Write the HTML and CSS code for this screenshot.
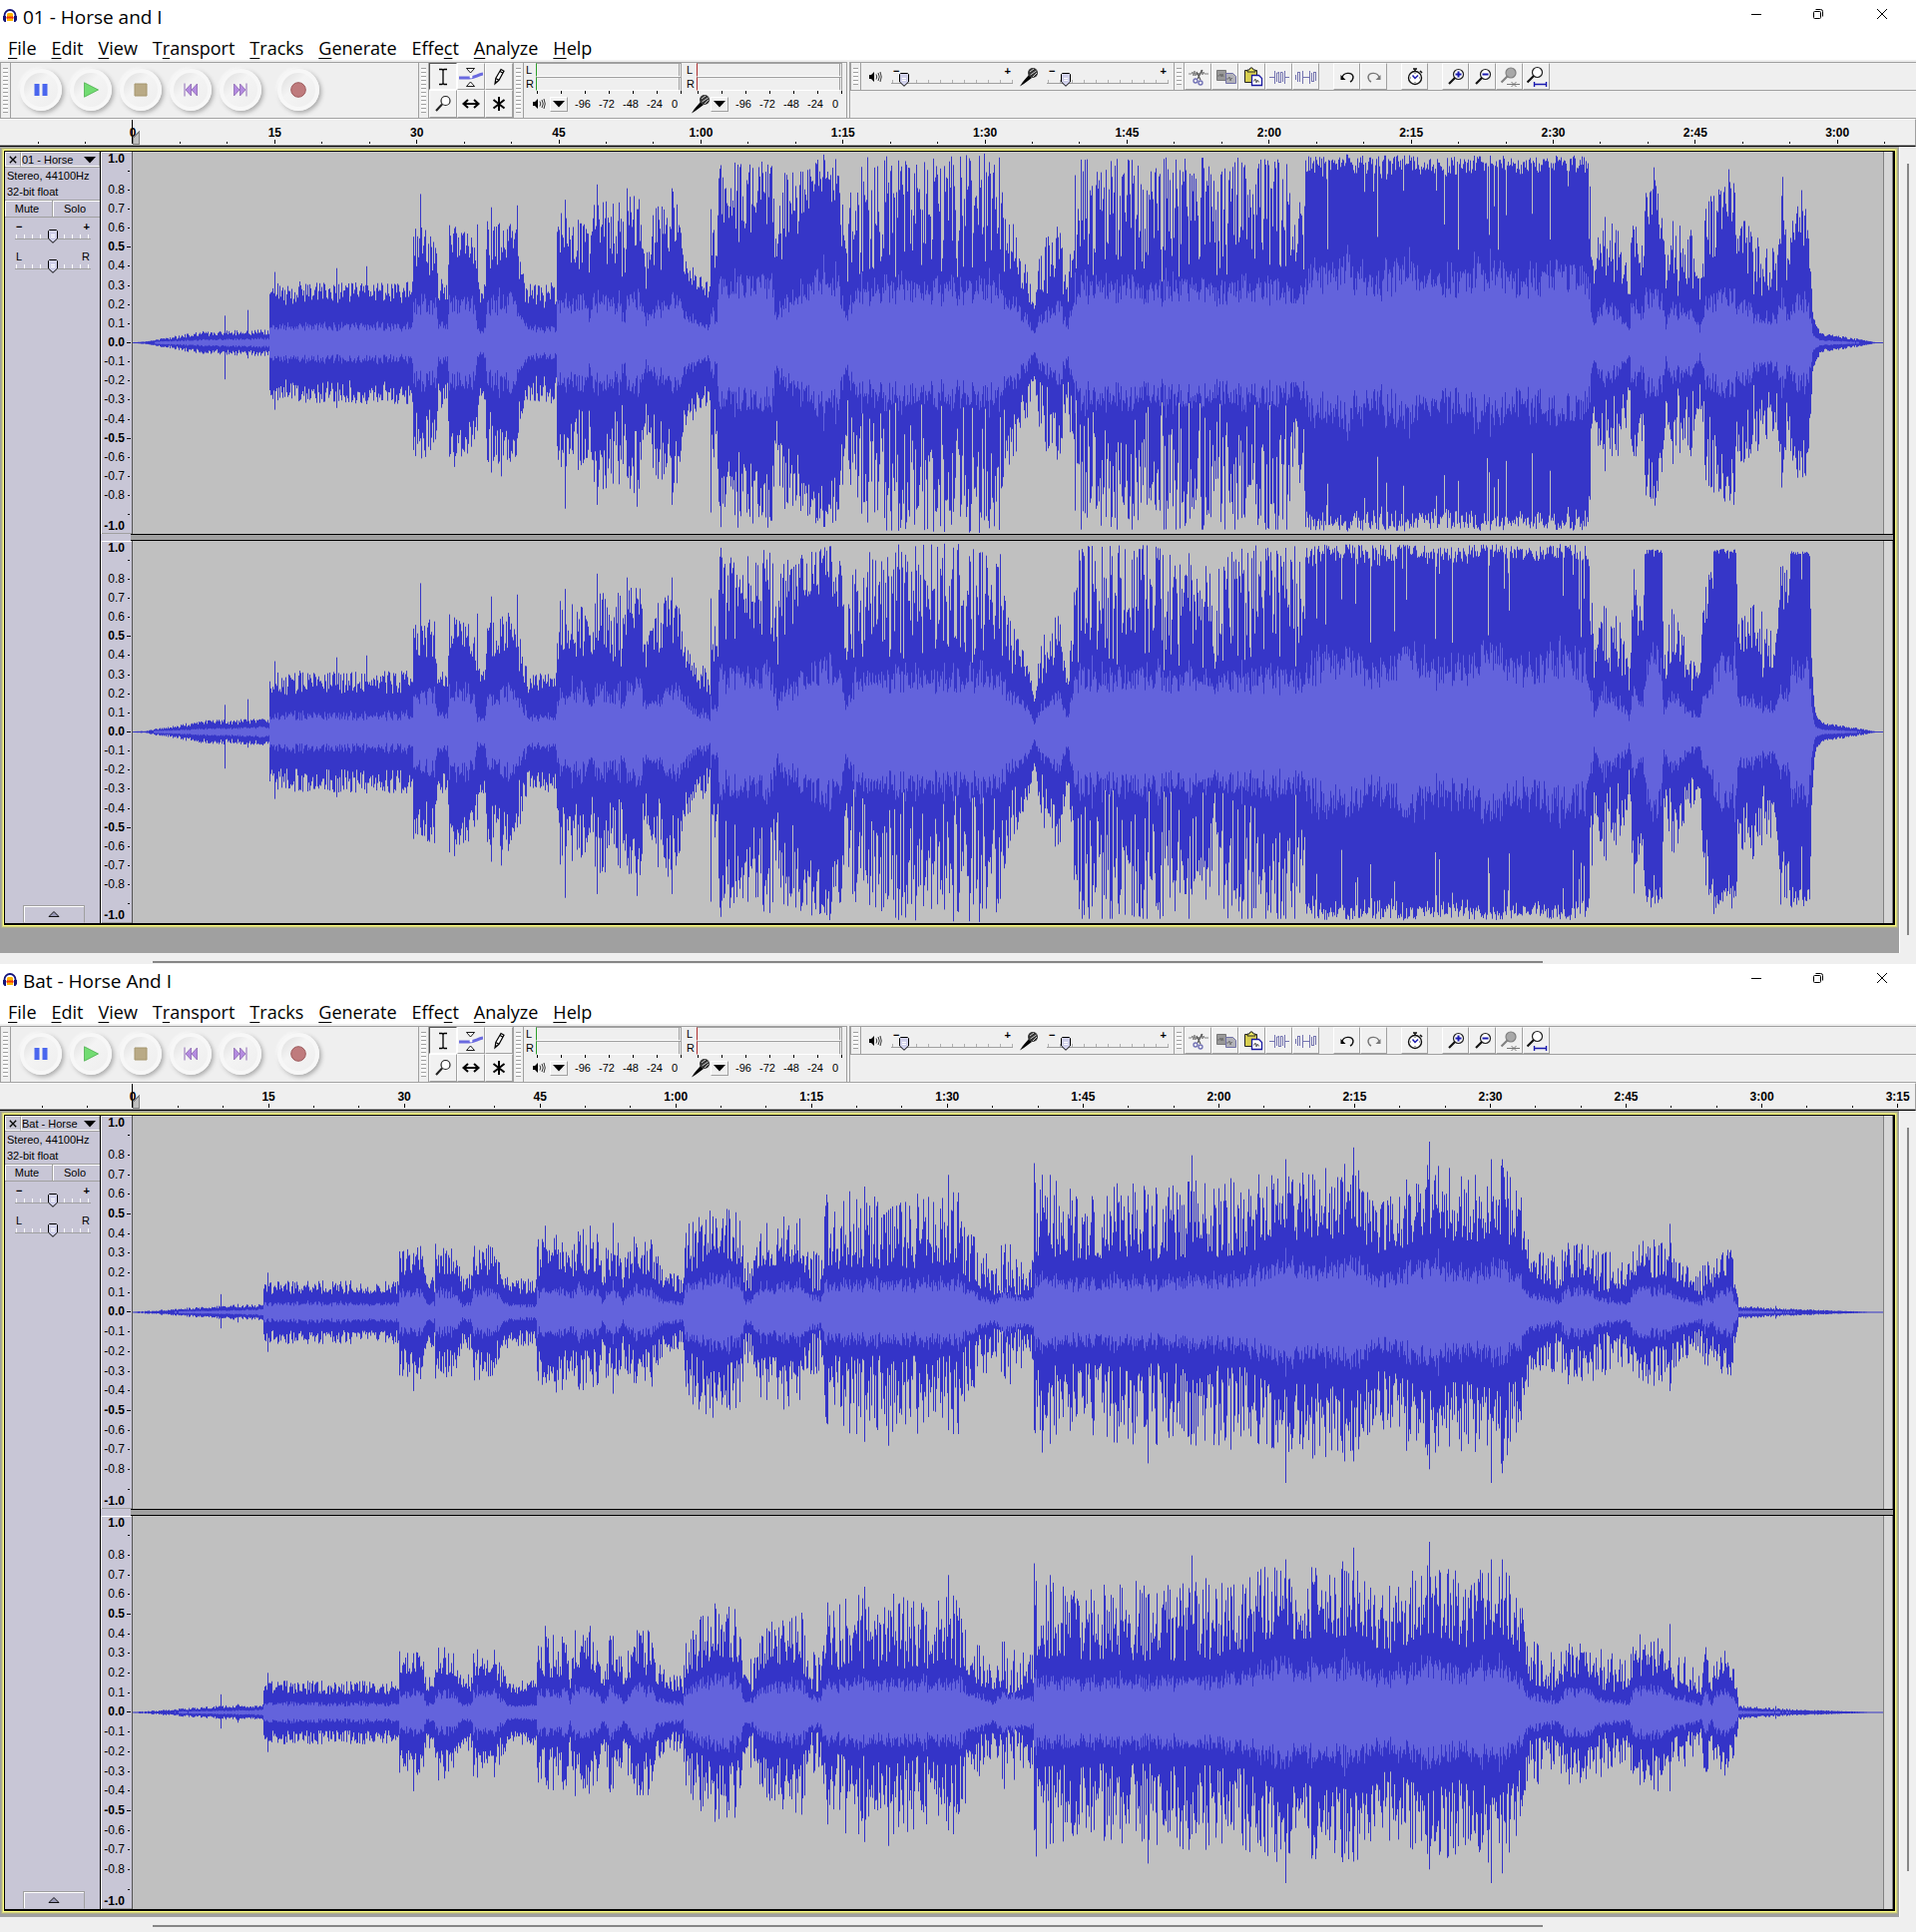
FILE: index.html
```
<!DOCTYPE html>
<html lang="en">
<head>
<meta charset="utf-8">
<title>Audacity</title>
<link rel="stylesheet" href="styles.css">
</head>
<body>
<svg class="sprite" aria-hidden="true">
  <symbol id="i-logo" viewBox="0 0 14 14"><path d="M1.500 10V6.500a5.500 5.500 0 0 1 11 0V10" fill="none" stroke="#13137a" stroke-width="1.800"/><path d="M0 7h3v6H1.500L0 11zM14 7h-3v6h1.500L14 11z" fill="#13137a"/><path d="M4 5l1-1h4l1 1v7H4z" fill="#ffb400"/><path d="M3 9l1.500-2 1.500 1 1-1 1 1 1.500-1L11 9l-1.500 1-1.500-1-1 1-1-1-1.500 1z" fill="#f03010"/></symbol>
  <symbol id="i-min" viewBox="0 0 12 12"><path d="M1 6.500h10" stroke="#000"/></symbol>
  <symbol id="i-max" viewBox="0 0 12 12"><rect x="1.500" y="3.500" width="7" height="7" rx="1" fill="none" stroke="#000"/><path d="M3.500 1.500h5a2 2 0 0 1 2 2v5" fill="none" stroke="#000"/></symbol>
  <symbol id="i-close" viewBox="0 0 12 12"><path d="M1 1l10 10M11 1L1 11" stroke="#000"/></symbol>
  <symbol id="i-pause" viewBox="0 0 16 16"><path d="M1.500 2h5v12h-5zM9.500 2h5v12h-5z" fill="#4a66ee"/></symbol>
  <symbol id="i-play" viewBox="0 0 16 16"><path d="M1.500.8v14.400L15.500 8z" fill="#72dc72" stroke="#4fae50" stroke-width=".8"/></symbol>
  <symbol id="i-stop" viewBox="0 0 16 16"><path d="M2 2h12v12H2z" fill="#b9aa86" stroke="#a5966f"/></symbol>
  <symbol id="i-start" viewBox="0 0 16 16"><path d="M2 1.500v13" stroke="#8d68b5"/><path d="M8.500 2v12L3 8zM14.500 2v12L9 8z" fill="#b48be0" stroke="#8a66b0" stroke-width=".8"/></symbol>
  <symbol id="i-end" viewBox="0 0 16 16"><path d="M14 1.500v13" stroke="#8d68b5"/><path d="M7.500 2v12L13 8zM1.500 2v12L7 8z" fill="#b48be0" stroke="#8a66b0" stroke-width=".8"/></symbol>
  <symbol id="i-rec" viewBox="0 0 16 16"><circle cx="8" cy="8" r="7.300" fill="#bf7b7d" stroke="#9d5b5d"/></symbol>
  <symbol id="i-select" viewBox="0 0 24 24"><path d="M8 4.500h3l1 1 1-1h3M12 5v14M8 19.500h3l1-1 1 1h3" fill="none" stroke="#000" stroke-width="1.300"/></symbol>
  <symbol id="i-envelope" viewBox="0 0 24 24"><path d="M0 13h10c6 0 8-3 14-4" fill="none" stroke="#6a6ae0" stroke-width="3"/><path d="M7.500 3.500h8L11.500 8zM7.500 21.500h8l-4-4.500z" fill="#fff" stroke="#000" stroke-width=".9"/><circle cx="12" cy="12" r="1.500" fill="#fff"/></symbol>
  <symbol id="i-draw" viewBox="0 0 24 24"><path d="M8 19l.8-5.500L14 4.500l3 1.800-5 9zM8.800 13.500l3 1.800M13 6.500l3 1.800" fill="#fff" stroke="#000" stroke-width="1.200"/><path d="M8 19l.5-3 2 1z"/></symbol>
  <symbol id="i-zoom" viewBox="0 0 24 24"><circle cx="14.500" cy="9" r="4.500" fill="#fff" stroke="#222" stroke-width="1.200"/><path d="M11 12.500L5 19" stroke="#222" stroke-width="2"/></symbol>
  <symbol id="i-shift" viewBox="0 0 24 24"><path d="M5 12h14M9 8l-4.500 4L9 16M15 8l4.500 4L15 16" fill="none" stroke="#000" stroke-width="2"/></symbol>
  <symbol id="i-multi" viewBox="0 0 24 24"><path d="M12 5v14M6.500 8l11 8.500M17.500 8l-11 8.500" stroke="#000" stroke-width="2"/></symbol>
  <symbol id="i-speaker" viewBox="0 0 14 14"><path d="M1 5h2l3-3v10L3 9H1z"/><path d="M8 4.500q1.500 2.500 0 5M10 3q2.500 4 0 8M12 2q2.500 5 0 10" fill="none" stroke="#222" stroke-width=".9"/></symbol>
  <symbol id="i-mic" viewBox="0 0 20 20"><path d="M10 8l3 3-8 6-4 2.500L4 15z"/><circle cx="14" cy="6" r="5" fill="#333"/><path d="M11 5l4-3M11.500 8l6-4M14 10l4-4" stroke="#ccc" stroke-width="1"/></symbol>
  <symbol id="i-down" viewBox="0 0 12 8"><path d="M0 1h12L6 7.500z"/></symbol>
  <symbol id="i-cut" viewBox="0 0 24 24"><path d="M2 9h3l1-2 1 4 1-5 1 5 1-3 1 2 1-2 1 2 2-5 1 5 1-3 1 2h4" fill="none" stroke="#777" stroke-width=".9"/><path d="M16 5l-5 9M10 7l4 8" stroke="#555" stroke-width="1.200"/><circle cx="9" cy="16" r="2" fill="none" stroke="#6f6fb4" stroke-width="1.300"/><circle cx="14" cy="18" r="2" fill="none" stroke="#6f6fb4" stroke-width="1.300"/></symbol>
  <symbol id="i-copy" viewBox="0 0 24 24"><path d="M3.500 5.500h9v10h-9z" fill="#999" stroke="#777"/><path d="M12.500 8.500h7l3 3v7h-10z" fill="#b2b2b8" stroke="#7070a8"/><path d="M4 11h2l1-2 1 3 1-3 1 3M13 14h2l1-2 1 4 1-3 1 1" fill="none" stroke="#666" stroke-width=".8"/></symbol>
  <symbol id="i-paste" viewBox="0 0 24 24"><path d="M4.500 5.500h12v12h-12z" fill="#d8cf50" stroke="#222"/><path d="M7 7V5h2l1-2h2l1 2h2v2z" fill="#f4f060" stroke="#222"/><path d="M11.500 10.500h7l3 3v7h-10z" fill="#fff" stroke="#1818a0" stroke-width="1.300"/><path d="M13 16h1l1-2 1 4 1-3 1 2h1" fill="none" stroke="#444" stroke-width=".8"/></symbol>
  <symbol id="i-trim" viewBox="0 0 24 24"><path d="M2 12.500h5M17 12.500h5M7.500 6v13M17.500 6v13M9.500 8v9M11.500 7v11M13.500 7v11M15.500 8v9M9.500 8h2M11.500 17.500h2M13.500 7.500h2" fill="none" stroke="#7474b0"/></symbol>
  <symbol id="i-silence" viewBox="0 0 24 24"><path d="M1.500 10v5M3.500 7v10M5.500 7v10M3.500 7.500h2M8.500 6v13M8 12.500h7M15.500 6v13M17.500 8v9M19.500 7v10M21.500 7v9M19.500 7.500h2M17.500 16.500h2" fill="none" stroke="#7474b0"/></symbol>
  <symbol id="i-undo" viewBox="0 0 24 24"><path d="M7 13c1-6 10-6 11-1 0 3-1 4-3 5" fill="none" stroke="#111" stroke-width="1.400"/><path d="M5.500 10v5h5z"/></symbol>
  <symbol id="i-redo" viewBox="0 0 24 24"><path d="M17 13c-1-6-10-6-11-1 0 3 1 4 3 5" fill="none" stroke="#777" stroke-width="1.400"/><path d="M18.500 10v5h-5z" fill="#777"/></symbol>
  <symbol id="i-timer" viewBox="0 0 24 24"><circle cx="12" cy="13" r="6.500" fill="#fff" stroke="#111" stroke-width="1.400"/><path d="M10 4h4M12 4v3M17 6l2 2" stroke="#111" stroke-width="1.600"/><path d="M9.500 10.500l2.500 3 3-3" fill="none" stroke="#1a1ab0" stroke-width="1.500"/><path d="M12 8v1M12 17v1M7 13h1M16 13h1" stroke="#555"/></symbol>
  <symbol id="i-zin" viewBox="0 0 24 24"><circle cx="14.500" cy="9.500" r="5" fill="#fff" stroke="#222" stroke-width="1.200"/><path d="M11 13l-6 6" stroke="#111" stroke-width="2.200"/><path d="M11.500 9.500h6M14.500 6.500v6" stroke="#1a1ab0" stroke-width="2"/></symbol>
  <symbol id="i-zout" viewBox="0 0 24 24"><circle cx="14.500" cy="9.500" r="5" fill="#fff" stroke="#222" stroke-width="1.200"/><path d="M11 13l-6 6" stroke="#111" stroke-width="2.200"/><path d="M11.500 9.500h6" stroke="#1a1ab0" stroke-width="2"/></symbol>
  <symbol id="i-zsel" viewBox="0 0 24 24"><circle cx="13" cy="8" r="5" fill="#a8a8a8" stroke="#808080" stroke-width="1.200"/><path d="M9.500 11.500l-6 6" stroke="#808080" stroke-width="2.200"/><path d="M9 19.500h13M13.500 17l2.500 2.500-2.500 2.500M18.500 17L16 19.500l2.500 2.500" fill="none" stroke="#777"/></symbol>
  <symbol id="i-zfit" viewBox="0 0 24 24"><circle cx="12.500" cy="7.500" r="5" fill="#fff" stroke="#222" stroke-width="1.200"/><path d="M9 11l-6.500 6.500" stroke="#111" stroke-width="2.200"/><path d="M9.500 17v5M21.500 17v5M9.500 19.500h12" stroke="#1a1ab0" stroke-width="1.400"/></symbol>
  <symbol id="i-up" viewBox="0 0 12 8"><path d="M1 6.500L6 1.500l5 5z" fill="#9a9ab8" stroke="#000" stroke-width=".9"/></symbol>
  <symbol id="i-x" viewBox="0 0 10 10"><path d="M1 1l8 8M9 1L1 9" stroke="#000" stroke-width="1.600"/></symbol>
</svg>

<template id="window-template">
  <header class="titlebar">
    <svg class="logo"><use href="#i-logo"/></svg>
    <h1 class="title"></h1>
    <div class="caption">
      <button class="minimize" aria-label="Minimize"><svg><use href="#i-min"/></svg></button>
      <button class="restore" aria-label="Restore"><svg><use href="#i-max"/></svg></button>
      <button class="close" aria-label="Close"><svg><use href="#i-close"/></svg></button>
    </div>
  </header>
  <nav class="menu">
    <button><u>F</u>ile</button><button><u>E</u>dit</button><button><u>V</u>iew</button><button>T<u>r</u>ansport</button><button><u>T</u>racks</button><button><u>G</u>enerate</button><button>Effe<u>c</u>t</button><button><u>A</u>nalyze</button><button><u>H</u>elp</button>
  </nav>
  <div class="dock">
    <div class="bar transport">
      <i class="grip"></i>
      <div class="rounds">
        <button class="round" aria-label="Pause"><svg><use href="#i-pause"/></svg></button>
        <button class="round" aria-label="Play"><svg><use href="#i-play"/></svg></button>
        <button class="round" aria-label="Stop"><svg><use href="#i-stop"/></svg></button>
        <button class="round" aria-label="Skip to start"><svg><use href="#i-start"/></svg></button>
        <button class="round" aria-label="Skip to end"><svg><use href="#i-end"/></svg></button>
        <button class="round record" aria-label="Record"><svg><use href="#i-rec"/></svg></button>
      </div>
    </div>
    <div class="bar tools">
      <i class="grip"></i>
      <div class="tool-grid">
        <button class="tool pressed" aria-label="Selection"><svg><use href="#i-select"/></svg></button>
        <button class="tool" aria-label="Envelope"><svg><use href="#i-envelope"/></svg></button>
        <button class="tool" aria-label="Draw"><svg><use href="#i-draw"/></svg></button>
        <button class="tool" aria-label="Zoom"><svg><use href="#i-zoom"/></svg></button>
        <button class="tool" aria-label="Time shift"><svg><use href="#i-shift"/></svg></button>
        <button class="tool" aria-label="Multi-tool"><svg><use href="#i-multi"/></svg></button>
      </div>
    </div>
    <div class="bar meters">
      <i class="grip"></i>
      <div class="meter play-meter">
        <div class="lanes"><span>L</span><i class="lane"></i><span>R</span><i class="lane"></i></div>
        <i class="meter-ticks"></i>
        <div class="scale"><svg class="dev"><use href="#i-speaker"/></svg><button class="drop" aria-label="Output meter"><svg><use href="#i-down"/></svg></button><span>-96</span><span>-72</span><span>-48</span><span>-24</span><span class="zero">0</span></div>
      </div>
      <div class="meter rec-meter">
        <div class="lanes"><span>L</span><i class="lane"></i><span>R</span><i class="lane"></i></div>
        <i class="meter-ticks"></i>
        <div class="scale"><svg class="dev mic"><use href="#i-mic"/></svg><button class="drop" aria-label="Input meter"><svg><use href="#i-down"/></svg></button><span>-96</span><span>-72</span><span>-48</span><span>-24</span><span class="zero">0</span></div>
      </div>
    </div>
    <div class="side">
      <div class="side-row">
        <i class="grip"></i>
        <div class="mixer">
          <svg class="dev"><use href="#i-speaker"/></svg>
          <label class="slider"><span class="ends"><b>−</b><b>+</b></span><input type="range" value="6" aria-label="Output volume"></label>
          <svg class="dev mic"><use href="#i-mic"/></svg>
          <label class="slider"><span class="ends"><b>−</b><b>+</b></span><input type="range" value="12" aria-label="Input volume"></label>
        </div>
        <i class="grip"></i>
        <div class="edit">
          <button class="tool" aria-label="Cut"><svg><use href="#i-cut"/></svg></button>
          <button class="tool" aria-label="Copy"><svg><use href="#i-copy"/></svg></button>
          <button class="tool" aria-label="Paste"><svg><use href="#i-paste"/></svg></button>
          <button class="tool" aria-label="Trim"><svg><use href="#i-trim"/></svg></button>
          <button class="tool" aria-label="Silence"><svg><use href="#i-silence"/></svg></button>
          <button class="tool apart" aria-label="Undo"><svg><use href="#i-undo"/></svg></button>
          <button class="tool" aria-label="Redo"><svg><use href="#i-redo"/></svg></button>
          <button class="tool apart" aria-label="Sync-lock"><svg><use href="#i-timer"/></svg></button>
          <button class="tool apart" aria-label="Zoom in"><svg><use href="#i-zin"/></svg></button>
          <button class="tool" aria-label="Zoom out"><svg><use href="#i-zout"/></svg></button>
          <button class="tool" aria-label="Fit selection"><svg><use href="#i-zsel"/></svg></button>
          <button class="tool" aria-label="Fit project"><svg><use href="#i-zfit"/></svg></button>
        </div>
      </div>
    </div>
  </div>
  <div class="timeline"><svg class="time-axis"></svg></div>
  <div class="workspace">
    <main class="track-area">
      <div class="track">
        <aside class="panel">
          <div class="panel-head"><button class="panel-x" aria-label="Close track"><svg><use href="#i-x"/></svg></button><button class="panel-name"><span class="name"></span><svg><use href="#i-down"/></svg></button></div>
          <p class="format">Stereo, 44100Hz<br>32-bit float</p>
          <div class="pair"><button>Mute</button><button>Solo</button></div>
          <label class="slider"><span class="ends"><b>−</b><b>+</b></span><input type="range" aria-label="Gain"></label>
          <label class="slider"><span class="ends"><span>L</span><span>R</span></span><input type="range" aria-label="Pan"></label>
          <button class="collapse" aria-label="Collapse track"><svg><use href="#i-up"/></svg></button>
        </aside>
        <div class="channels">
          <div class="channel"><div class="level-axis"></div><svg class="wave" viewBox="0 0 1754 400" preserveAspectRatio="none"></svg><i class="clip-end"></i></div>
          <div class="channel"><div class="level-axis"></div><svg class="wave" viewBox="0 0 1754 400" preserveAspectRatio="none"></svg><i class="clip-end"></i></div>
        </div>
      </div>
    </main>
    <div class="vscroll"><i></i></div>
  </div>
  <div class="hscroll"><i></i></div>
</template>

<section class="window window-first"></section>
<section class="window window-second"></section>
<script src="app.js"></script>
</body>
</html>
```
FILE: styles.css
```
*, *::before, *::after { box-sizing: border-box; }
body { margin: 0; background: #efefef; color: #000; font: 11px/16px "Liberation Sans", Arial, sans-serif; }
button { margin: 0; padding: 0; border: 0; background: none; font: inherit; color: inherit; }
svg { display: block; }
.sprite { position: absolute; width: 0; height: 0; }

.titlebar { display: flex; height: 32px; padding-left: 3px; background: #fff; }
.logo { width: 14px; height: 14px; margin: 9px 6px 0 0; }
.title { margin: 0; flex: 1; font: 19px/34px "Open Sans", "Noto Sans", sans-serif; }
.caption { display: flex; }
.caption button { width: 64px; height: 28px; display: grid; place-items: center; }
.caption .restore { width: 60px; }
.caption .close { width: 68px; }
.caption svg { width: 12px; height: 12px; }
.menu { display: flex; gap: 15px; height: 28px; padding-left: 8px; background: #fff; font: 18px/32px "Open Sans", "Noto Sans", sans-serif; }
.menu u { text-decoration-thickness: 1px; text-underline-offset: 3px; }

.dock { display: flex; height: 59px; border-top: 2px solid #efefef; border-bottom: 1px solid #a0a0a0; background: #efefef; }
.bar { display: flex; border-top: 1px solid #a0a0a0; }
.grip { flex: none; width: 11px; border-right: 1px solid #a0a0a0; border-left: 1px solid #a0a0a0; background: repeating-linear-gradient(#a0a0a0 0 1px, #fafafa 1px 4px) content-box #f8f8f8; padding: 5px 2px; }
.transport { width: 419px; }
.rounds { display: flex; align-items: center; gap: 8px; padding: 0 0 2px 9px; }
.round { width: 42px; height: 42px; border-radius: 50%; display: grid; place-items: center; background: linear-gradient(135deg, #ddd, #f4f4f4 40%, #eee); border: 4px solid #f7f7f7; box-shadow: 2px 2px 4px #aaa, -1px -1px 3px #fff; }
.round svg { width: 16px; height: 16px; }
.record { margin-left: 8px; }
.tools { width: 95px; }
.tool-grid { display: grid; grid-template-columns: 28px 28px 28px; grid-template-rows: 27px 28px; }
.tool { display: grid; place-items: center; border: 1px solid; border-color: #fff #a0a0a0 #a0a0a0 #fff; background: #f1f1f1; }
.tool svg { width: 24px; height: 24px; }
.pressed { border-color: #555 #fff #fff #555; }
.meters { width: 335px; border-right: 1px solid #a0a0a0; }
.meter { width: 161px; flex: none; padding-left: 2px; }
.lanes { display: grid; grid-template-columns: 10px 146px; grid-template-rows: 14px 14px; line-height: 15px; }
.lane { border: 1px solid #a0a0a0; border-width: 1px 3px 1px 1px; border-right-style: double; border-bottom-color: #fff; border-left-color: #2ca02c; }
.rec-meter .lane { border-left-color: #b03030; }
.meter-ticks { display: block; height: 3px; margin: 0 0 0 11px; background: repeating-linear-gradient(90deg, #000 0 1px, transparent 1px 24px); }
.scale { display: flex; height: 20px; align-items: center; }
.scale span { width: 24px; text-align: center; }
.scale .zero { width: 16px; }
.dev { flex: none; width: 14px; height: 14px; margin: 0 4px 0 6px; }
.mic { width: 20px; height: 20px; margin: 0 0 0 4px; }
.drop { width: 18px; height: 15px; margin-right: 3px; display: grid; place-items: center; border: 1px solid; border-color: #fff #a0a0a0 #a0a0a0 #fff; }
.drop svg { width: 12px; height: 8px; }
.side { flex: 1; margin-left: 2px; border-left: 1px solid #a0a0a0; border-top: 1px solid #a0a0a0; }
.side-row { display: flex; height: 28px; border-bottom: 1px solid #a0a0a0; }
.mixer { display: flex; align-items: center; width: 313px; }
.mixer .slider { width: 122px; margin-left: 6px; }
.mixer .mic { margin-left: 6px; }
.mixer .slider + .mic + .slider { margin-left: 8px; }
.mixer .dev:first-child { margin: 0 3px 0 7px; }
.edit { display: flex; }
.edit .tool { width: 27px; }
.edit .apart { margin-left: 14px; }

.slider { display: flex; flex-direction: column; }
.ends { display: flex; justify-content: space-between; height: 7px; padding: 0 2px; line-height: 10px; font-size: 11px; }
.slider input { appearance: none; width: 100%; height: 14px; margin: 0; background: linear-gradient(#a0a0a0, #a0a0a0) 0 10px / 100% 1px no-repeat, repeating-linear-gradient(90deg, #b0b0b0 0 1px, transparent 1px 12px) 1px 7px / 100% 3px no-repeat; }
.slider input::-webkit-slider-thumb { appearance: none; width: 12px; height: 14px; background: url("data:image/svg+xml,%3Csvg xmlns='http://www.w3.org/2000/svg' viewBox='0 0 12 14'%3E%3Cpath d='M2.500.5h7l1 1V9L6 13.300 1.500 9V1.500z' fill='%23d0d0ea' stroke='%23000'/%3E%3Cpath d='M4 5.500h4M4 7.500h4' stroke='%23fff'/%3E%3C/svg%3E"); }

.timeline { height: 28px; padding-left: 133px; background: #efefef; border-top: 1px solid #fff; border-bottom: 1px solid #000; border-right: 1px solid #a0a0a0; box-shadow: inset 0 -1px #a0a0a0; }
.time-axis { width: 100%; height: 25px; overflow: visible; font: bold 12px "Liberation Sans", Arial, sans-serif; shape-rendering: crispEdges; }

.workspace { display: flex; }
.track-area { flex: 1; padding: 4px 4px 28px; background: #a0a0a0; }
.window-second .track-area { padding-bottom: 6px; }
.track { display: flex; border: 1px solid #000; border-width: 1px 2px 2px 1px; box-shadow: 0 0 0 1px #ffff82, 0 0 0 2px #d2d280, 0 0 0 3px #adad8c; background: #c8c6d6; }
.panel { flex: none; display: flex; flex-direction: column; width: 96px; border-right: 1px solid #000; }
.panel-head { display: flex; height: 16px; border-bottom: 1px solid #a0a0a0; }
.panel-x { width: 16px; display: grid; place-items: center; border: 1px solid #fff; border-right-color: #a0a0a0; }
.panel-x svg { width: 8px; height: 8px; }
.panel-name { flex: 1; display: flex; justify-content: space-between; align-items: center; padding: 0 3px 0 0; border: 1px solid #fff; border-right-color: #a0a0a0; }
.panel-name svg { width: 12px; height: 8px; }
.format { margin: 0; padding: 0 2px 1px; height: 33px; border-bottom: 1px solid #a0a0a0; white-space: nowrap; }
.pair { display: flex; height: 17px; gap: 1px; background: #a0a0a0; padding-bottom: 1px; }
.pair button { flex: 1; padding-right: 4px; border: 1px solid #fff; border-right: 0; border-bottom: 0; background: #c8c6d6; line-height: 13px; }
.panel .slider { margin: 4px 9px 0 10px; }
.panel .ends { height: 8px; padding: 0 1px; }
.panel .slider + .slider { margin-top: 8px; }
.panel .slider input { background: linear-gradient(#a0a0a0, #a0a0a0) 0 9px / 100% 1px no-repeat, repeating-linear-gradient(90deg, #fff 0 1px, transparent 1px 8px) 1px 5px / 100% 4px no-repeat; }
.collapse { width: 62px; height: 18px; margin: auto 0 0 18px; display: grid; place-items: center; border: 1px solid #a0a0a0; border-bottom-color: #c8c6d6; box-shadow: inset 1px 1px #fff; }
.collapse svg { width: 12px; height: 8px; }

.channels { flex: 1; display: flex; flex-direction: column; min-width: 0; }
.channel { display: flex; height: 383px; }
.window-second .channel { height: 394px; }
.channel + .channel { margin-top: 7px; position: relative; }
.channel + .channel::before { content: ""; position: absolute; left: 30px; right: 0; top: -7px; height: 7px; background: #a0a0a0; border: solid #000; border-width: 1px 0; }
.level-axis { flex: none; width: 32px; display: grid; grid-template-rows: 1fr repeat(19, 2fr) 1fr; border: solid; border-width: 0 1px; border-color: #fff #555 #a0a0a0 #fff; box-shadow: inset 0 1px #fff, inset 0 -1px #a0a0a0; font-size: 12px; line-height: 15px; }
.level { min-height: 0; display: flex; justify-content: flex-end; align-items: center; height: 100%; }
.level::after { content: ""; width: 2px; height: 1px; margin: 0 2px 0 3px; background: #000; }
.level.strong { font-weight: bold; }
.level.strong::after { width: 4px; margin: 0 1px 0 2px; }
.level:first-child { align-items: flex-start; }
.level:last-child { align-items: flex-end; }
.level:first-child::after, .level:last-child::after { background: none; }
.wave { flex: 1; min-width: 0; height: 100%; background: #c0c0c0; shape-rendering: crispEdges; }
.wave path { fill: none; stroke-width: 1px; }
.wave .peak { stroke: #3232c8; }
.wave .rms { stroke: #6464dc; }
.clip-end { flex: none; width: 10px; background: #d6d6d6; border: solid #808080; border-width: 0 1px; }

.vscroll { width: 17px; padding: 17px 0 15px 7px; border-left: 1px solid #fff; }
.vscroll i { display: block; width: 2px; height: 773px; background: #868686; }
.window-second .vscroll i { height: 745px; }
.hscroll { height: 11px; padding: 8px 374px 0 153px; background: #efefef; }
.window-second .hscroll { height: 15px; }
.hscroll i { display: block; height: 2px; background: #868686; }
```
FILE: app.js
```
// Envelope points: [x, quiet peak, loud peak, rms]
const loudHead = [
  [0,0,0,0],[12,0,.005,0],[22,.006,.015,.006],[70,.03,.06,.018],[136,.04,.07,.028],
  [137,.19,.31,.1],[280,.2,.32,.1],[281,.35,.62,.22],[303,.35,.58,.24],[305,.2,.38,.12],[315,.2,.3,.1],
  [317,.4,.64,.24],[341,.38,.56,.24],[345,.2,.34,.08],[353,.2,.34,.08],[355,.35,.66,.22],[380,.45,.62,.27],[384,.28,.6,.2],
  [392,.2,.38,.13],[400,.17,.3,.08],[424,.18,.32,.09],[425,.35,.7,.22],[450,.35,.66,.26],[458,.25,.58,.15],
  [463,.4,.78,.26],[488,.35,.74,.24],[492,.3,.6,.13],[495,.45,.82,.27],[508,.42,.76,.27],[514,.25,.45,.14],
  [522,.3,.7,.18],[543,.45,.84,.28],[552,.32,.45,.18],[570,.2,.36,.11],[578,.18,.3,.09],[579,.4,.7,.2],[585,.3,.5,.12],
  [587,.45,.97,.32],[610,.5,.97,.37],[640,.5,.97,.35],[645,.3,.6,.16],[650,.4,.9,.22],[675,.6,.95,.32],[695,.8,1,.42],[708,.6,.95,.35],
  [714,.3,.6,.16],[718,.3,.75,.2],[724,.3,.98,.32],[870,.35,1,.33],[873,.35,.75,.26],[885,.28,.58,.22],[897,.2,.38,.14],
  [903,.12,.18,.05],[910,.22,.55,.16],[928,.25,.62,.22],[936,.18,.3,.09],[941,.3,.58,.22],[945,.3,.98,.33],[1174,.33,.98,.32],
  [1175,.85,.98,.37],[1215,.9,.99,.46],[1245,.85,.98,.35],[1279,.9,.99,.46],[1310,.85,.97,.34],[1360,.9,.99,.46],[1395,.88,.97,.36],[1430,.9,.99,.46],[1459,.85,.98,.36]
];
const leftTail = [
  [1460,.5,.9,.3],[1464,.25,.5,.12],[1475,.3,.68,.24],[1495,.25,.55,.14],[1499,.18,.3,.08],[1503,.45,.75,.26],[1511,.25,.45,.16],
  [1516,.55,.8,.29],[1524,.62,.88,.29],[1532,.4,.7,.24],[1536,.22,.4,.1],[1540,.25,.65,.22],[1561,.22,.6,.18],[1570,.2,.32,.08],
  [1576,.3,.72,.22],[1589,.5,.85,.29],[1604,.6,.85,.29],[1608,.35,.6,.22],[1619,.35,.68,.22],[1624,.22,.58,.16],[1647,.2,.5,.14],
  [1652,.4,.78,.27],[1660,.26,.5,.14],[1662,.5,.7,.24],[1677,.5,.74,.25],[1681,.25,.4,.14],[1684,.09,.13,.04],[1691,.03,.05,.014],[1728,.008,.02,.005],[1746,0,0,0],[1754,0,0,0]
];
const rightTail = leftTail.filter(p => p[0] < 1503).concat([
  [1503,.5,.95,.28],[1510,.4,.95,.2],[1513,.3,.6,.15],[1515,.93,.96,.4],[1532,.93,.96,.4],[1534,.22,.4,.1],[1540,.25,.68,.22],[1570,.2,.32,.08],
  [1576,.5,.96,.26],[1583,.5,.95,.26],[1585,.93,.96,.4],[1606,.93,.96,.4],[1608,.4,.65,.22],[1624,.25,.7,.18],[1647,.2,.52,.14],
  [1650,.4,.93,.25],[1659,.5,.9,.2],[1661,.92,.95,.38],[1680,.92,.95,.38],[1682,.25,.4,.14],[1685,.09,.13,.04],[1692,.03,.05,.014],[1728,.008,.02,.005],[1746,0,0,0],[1754,0,0,0]
]);
const quiet = [
  [0,0,0,0],[15,0,.006,0],[52,.01,.02,.006],[95,.02,.035,.01],[130,.022,.04,.016],[131,.09,.16,.05],[266,.09,.16,.05],
  [267,.18,.32,.11],[289,.2,.34,.12],[294,.1,.18,.05],[302,.1,.18,.05],[303,.2,.35,.12],[322,.18,.32,.11],[330,.1,.18,.04],[339,.1,.2,.05],[341,.18,.35,.12],[361,.18,.34,.12],
  [366,.13,.28,.09],[376,.09,.17,.04],[404,.09,.17,.04],[405,.18,.42,.12],[435,.17,.4,.12],[438,.12,.25,.07],[444,.2,.46,.15],[466,.18,.4,.12],[470,.12,.26,.06],[481,.2,.46,.15],[491,.12,.26,.06],
  [503,.2,.42,.14],[519,.18,.42,.13],[528,.12,.25,.07],[551,.08,.18,.05],[553,.17,.44,.13],[589,.27,.58,.21],[608,.24,.52,.18],[613,.1,.24,.06],[622,.1,.3,.08],
  [628,.22,.46,.14],[670,.24,.52,.17],[676,.1,.34,.1],[689,.09,.3,.07],[692,.2,.6,.16],[720,.22,.62,.17],[830,.22,.62,.17],[836,.13,.42,.12],[855,.1,.32,.08],[862,.08,.2,.05],[870,.09,.4,.11],[896,.08,.3,.08],
  [902,.12,.3,.08],[903,.28,.74,.2],[945,.26,.62,.17],[978,.26,.66,.18],[1052,.26,.7,.18],[1114,.28,.7,.2],[1151,.4,.78,.28],[1176,.34,.74,.24],[1223,.4,.78,.28],[1245,.3,.62,.2],
  [1262,.3,.66,.21],[1299,.4,.78,.28],[1336,.33,.7,.22],[1367,.4,.8,.28],[1392,.28,.62,.18],[1394,.15,.42,.11],[1429,.1,.28,.06],[1435,.18,.37,.13],
  [1462,.16,.35,.12],[1466,.1,.34,.08],[1499,.1,.26,.05],[1505,.18,.4,.14],[1534,.17,.4,.13],[1552,.1,.3,.08],[1572,.08,.2,.05],[1575,.14,.36,.11],[1583,.1,.2,.05],[1586,.16,.32,.12],[1602,.16,.32,.11],
  [1605,.1,.22,.07],[1609,.02,.035,.01],[1645,.01,.02,.006],[1707,.003,.006,0],[1740,0,0,0],[1754,0,0,0]
];
// Lone peaks: x -> [above, below]
const loudSpikes = {92:[.14,.19],115:[.17,.08],142:[.37,.35],145:[.31,.3],167:[.32,.3],204:[.39,.34],234:[.4,.32],288:[.78,.5],322:[.6,.65],345:[.62,.46],359:[.71,.68],369:[.5,.7],385:[.72,.5],433:[.75,.87],465:[.83,.85],495:[.81,.7],505:[.7,.86],540:[.81,.85],579:[.7,.89],1524:[.92,.75],1599:[.91,.75],1653:[.87,.68],1672:[.8,.6]};
const quietSpikes = {88:[.09,.08],105:[.04,.05],135:[.2,.2],281:[.3,.4],413:[.44,.33],458:[.44,.3],696:[.56,.57],733:[.64,.66],757:[.52,.68],817:[.7,.6],903:[.76,.6],919:[.7,.67],1061:[.8,.62],1017:[.6,.77],1155:[.78,.87],1223:[.84,.76],1299:[.87,.8],1361:[.78,.87],1372:[.78,.82],1540:[.45,.4],1646:[.03,.03]};

function random(seed) {
  return () => {
    seed = (seed + 0x6D2B79F5) | 0;
    let t = Math.imul(seed ^ (seed >>> 15), 1 | seed);
    t = (t + Math.imul(t ^ (t >>> 7), 61 | t)) ^ t;
    return ((t ^ (t >>> 14)) >>> 0) / 4294967296;
  };
}

function drawWave(svg, points, spikes, seed, bias) {
  const rnd = random(seed);
  let peak = '', rms = '', k = 0;
  for (let x = 0; x < 1754; x++) {
    while (k < points.length - 2 && points[k + 1][0] <= x) k++;
    const a = points[k], b = points[k + 1];
    const f = Math.min(1, (x - a[0]) / (b[0] - a[0]));
    const mix = i => a[i] + (b[i] - a[i]) * f;
    const lo = mix(1), hi = mix(2), body = mix(3);
    const r = rnd();
    let up = lo + (hi - lo) * Math.pow(r, bias);
    let down = lo + (hi - lo) * Math.pow(Math.min(1, Math.max(0, r + (rnd() - .5) * .3)), bias);
    if (lo > .8 && lo < .92 && rnd() < .09) { up *= .5 + .45 * rnd(); down *= .6 + .4 * rnd(); }
    if (lo > .91) down *= .86 + .12 * rnd();
    if (spikes[x]) [up, down] = spikes[x];
    const inner = Math.min(up, body * (.58 + .42 * r + .26 * rnd() * rnd()));
    peak += `M${x + .5} ${(199.5 - up * 199).toFixed(1)}V${(200.5 + down * 199).toFixed(1)}`;
    if (inner > .004) rms += `M${x + .5} ${(200 - inner * 199).toFixed(1)}V${(200 + inner * 199).toFixed(1)}`;
  }
  svg.innerHTML = `<path class="peak" d="${peak}"/><path class="rms" d="${rms}"/>`;
}

function drawTimeAxis(svg, perSecond, lastTick) {
  const pct = t => (t * perSecond / 1786 * 100).toFixed(3) + '%';
  let out = '';
  for (let t = -10; t <= lastTick; t += 5) {
    const major = t % 15 === 0;
    out += `<line x1="${pct(t)}" x2="${pct(t)}" y1="${major ? 20 : 22}" y2="24" stroke="#000"/>`;
    if (major && t >= 0) {
      const label = t < 60 ? t : Math.floor(t / 60) + ':' + String(t % 60).padStart(2, '0');
      out += `<text x="${pct(t)}" y="17" text-anchor="middle">${label}</text>`;
    }
  }
  out += '<path d="M6.500 12v12h-6V18z" fill="#c0c0c0" stroke="#808080"/><path d="M-.5 0v24" stroke="#000"/>';
  svg.innerHTML = out;
}

function fillLevels(axis) {
  for (let n = 10; n >= -10; n--) {
    const row = document.createElement('div');
    row.className = n % 5 ? 'level' : 'level strong';
    row.textContent = Math.abs(n) === 9 ? '' : (n / 10).toFixed(1);
    axis.append(row);
  }
}

function openWindow(selector, o) {
  const root = document.querySelector(selector);
  root.append(document.getElementById('window-template').content.cloneNode(true));
  root.querySelector('.title').textContent = o.title;
  root.querySelector('.name').textContent = o.name;
  drawTimeAxis(root.querySelector('.time-axis'), o.perSecond, o.lastTick);
  root.querySelectorAll('.level-axis').forEach(fillLevels);
  root.querySelectorAll('.wave').forEach((svg, i) => drawWave(svg, o.points[i], o.spikes, o.seed + i, o.bias));
}

openWindow('.window-first', { title: '01 - Horse and I', name: '01 - Horse', perSecond: 9.49, lastTick: 185,
  points: [loudHead.concat(leftTail), loudHead.concat(rightTail)], spikes: loudSpikes, seed: 11, bias: .7 });
openWindow('.window-second', { title: 'Bat - Horse And I', name: 'Bat - Horse', perSecond: 9.07, lastTick: 195,
  points: [quiet, quiet], spikes: quietSpikes, seed: 31, bias: 1.2 });
```
